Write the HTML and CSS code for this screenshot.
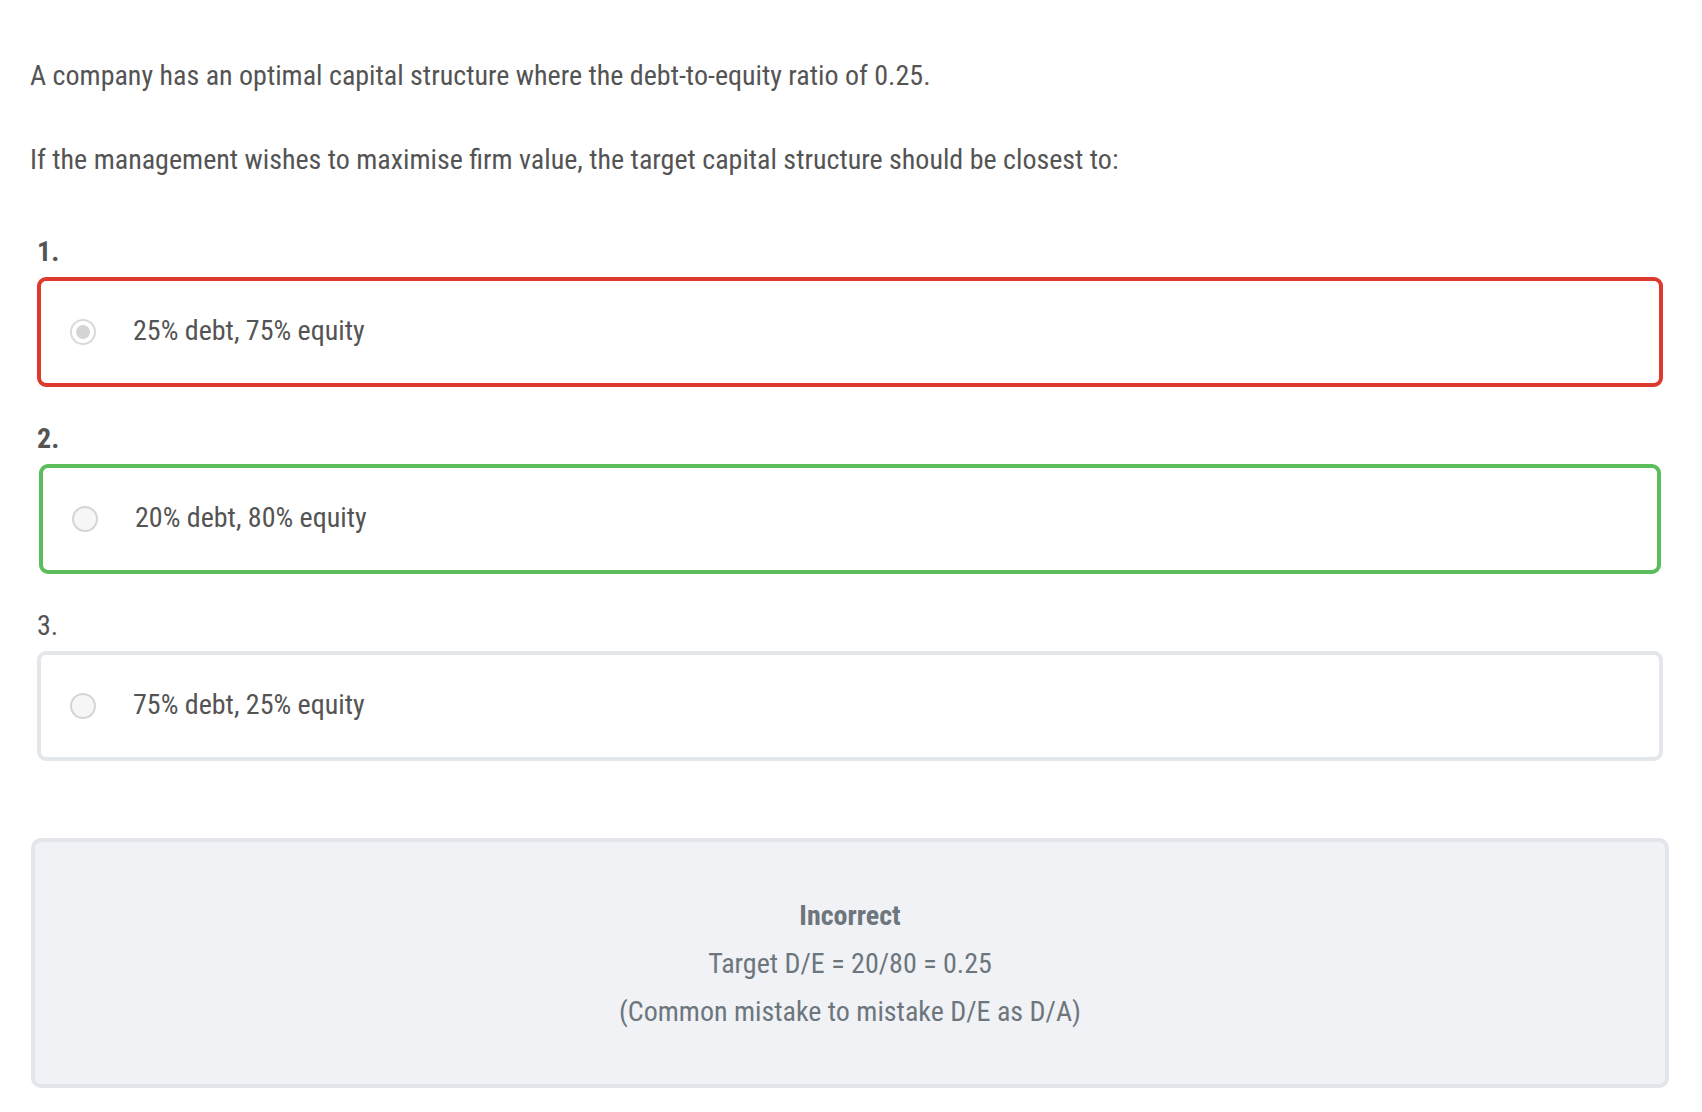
FILE: index.html
```html
<!DOCTYPE html>
<html lang="en">
<head>
<meta charset="utf-8">
<title>Question</title>
<link rel="stylesheet" href="styles.css">
</head>
<body>
<main class="quiz">
  <p class="stem">A company has an optimal capital structure where the debt-to-equity ratio of 0.25.</p>
  <p class="stem">If the management wishes to maximise firm value, the target capital structure should be closest to:</p>

  <ol class="options">
    <li class="option">
      <div class="num bold">1.</div>
      <label class="choice incorrect">
        <span class="radio checked"><span class="dot"></span></span>
        <span class="text">25% debt, 75% equity</span>
      </label>
    </li>
    <li class="option">
      <div class="num bold">2.</div>
      <label class="choice correct">
        <span class="radio"></span>
        <span class="text">20% debt, 80% equity</span>
      </label>
    </li>
    <li class="option">
      <div class="num">3.</div>
      <label class="choice">
        <span class="radio"></span>
        <span class="text">75% debt, 25% equity</span>
      </label>
    </li>
  </ol>

  <section class="feedback">
    <div class="fb-title">Incorrect</div>
    <div class="fb-line">Target D/E = 20/80 = 0.25</div>
    <div class="fb-line">(Common mistake to mistake D/E as D/A)</div>
  </section>
</main>
</body>
</html>
```
FILE: styles.css
```css
html, body {
  margin: 0;
  padding: 0;
  background: #ffffff;
}

body {
  font-family: "Roboto Condensed", "Liberation Sans Narrow", sans-serif;
  font-size: 28px;
  line-height: 42px;
  color: #545454;
}

.quiz {
  padding: 55px 30px 0 30px;
}

.stem {
  margin: 0 0 42px 0;
}

.options {
  list-style: none;
  margin: 50px 0 0 0;
  padding: 0 9px 0 7px;
}

.option {
  margin: 0 0 31px 0;
}

.num {
  margin: 0 0 4px 0;
}

.num.bold {
  font-weight: 700;
}

.choice {
  display: flex;
  align-items: center;
  height: 102px;
  border: 4px solid #e3e6ea;
  border-radius: 9px;
  padding: 0 29px;
  box-sizing: content-box;
}

.choice.incorrect {
  border-color: #dd3a2d;
}

.choice.correct {
  border-color: #5bbd5c;
  margin: 0 2px;
}

.radio {
  flex: 0 0 auto;
  width: 22px;
  height: 22px;
  border: 2px solid #d5d5d5;
  border-radius: 50%;
  background: #f6f6f6;
  display: flex;
  align-items: center;
  justify-content: center;
  margin-right: 37px;
}

.radio.checked {
  background: #ffffff;
  border-color: #dadada;
}

.radio .dot {
  width: 14px;
  height: 14px;
  border-radius: 50%;
  background: #d4d4d4;
}

.text {
  position: relative;
  top: -1px;
}

.feedback {
  margin: 77px 3px 25px 1px;
  border: 4px solid #e2e5e9;
  border-radius: 10px;
  background: #f0f2f5;
  padding: 50px 0 48px 0;
  text-align: center;
  color: #6c767c;
  line-height: 48px;
}

.fb-title {
  font-weight: 700;
}
```
